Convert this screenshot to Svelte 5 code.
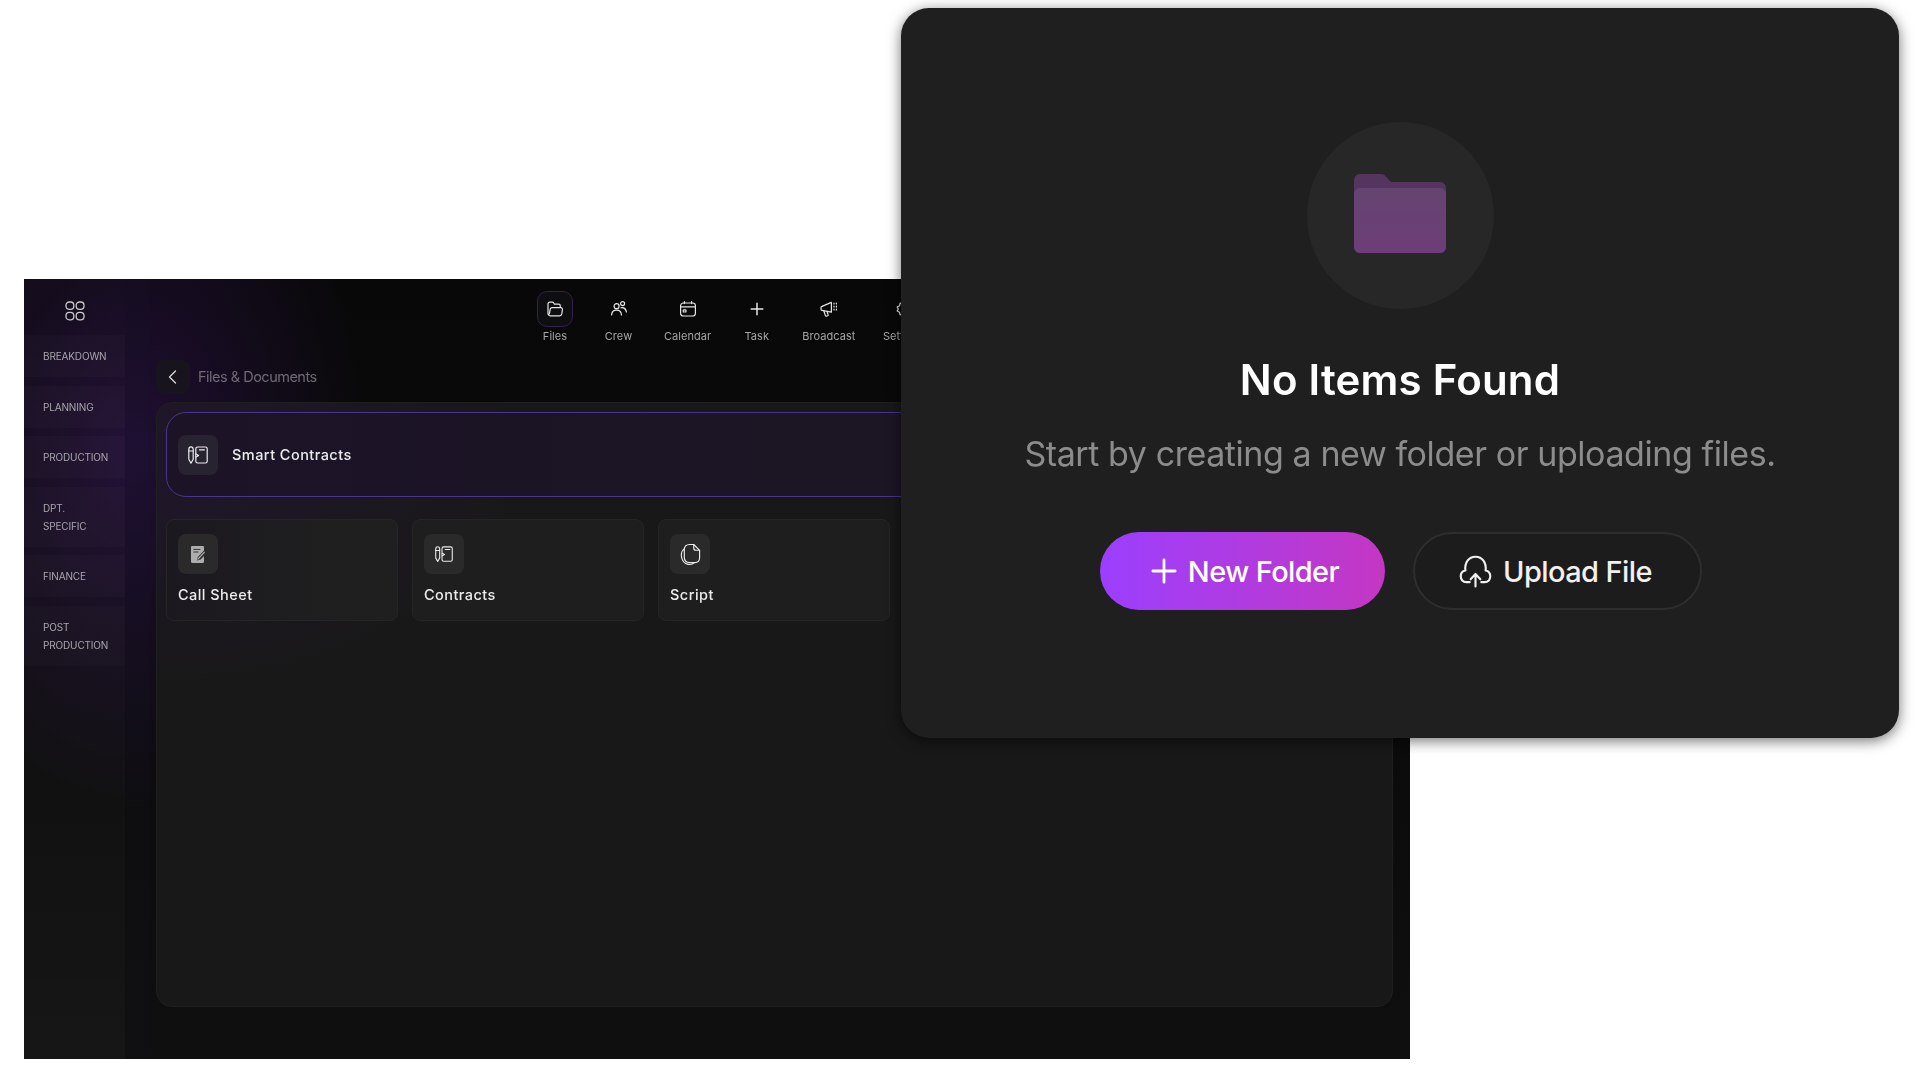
<script>
  const sections = [
    { lines: ['Breakdown'] },
    { lines: ['Planning'] },
    { lines: ['Production'] },
    { lines: ['Dpt.', 'Specific'] },
    { lines: ['Finance'] },
    { lines: ['Post', 'Production'] }
  ];

  const tabs = [
    { label: 'Files', icon: 'files', active: true },
    { label: 'Crew', icon: 'crew' },
    { label: 'Calendar', icon: 'calendar' },
    { label: 'Task', icon: 'task' },
    { label: 'Broadcast', icon: 'broadcast' },
    { label: 'Settings', icon: 'settings' }
  ];

  const folders = [
    { label: 'Call Sheet', icon: 'sheet' },
    { label: 'Contracts', icon: 'contract', size: 18 },
    { label: 'Script', icon: 'script' }
  ];
</script>

{#snippet tabIcon(name)}
  <svg viewBox="0 0 20 20" width="20" height="20" fill="none" stroke="currentColor" stroke-width="1.2" stroke-linecap="round" stroke-linejoin="round">
    {#if name === 'files'}
      <path d="M3 15V5.2C3 4 3.8 3.2 5 3.2h2.4c.6 0 1 .3 1.3.8l.7 1.2h4.2c1 0 1.7.7 1.7 1.700v1" />
      <path d="M3.200 15.400c.3.900 1 1.400 2 1.400h9.400c1.200 0 2-.8 2.200-1.900l.6-4.400c.1-1.100-.6-1.900-1.700-1.900H7.200c-1 0-1.800.6-2 1.600L4.600 14c-.1.800-.6 1.400-1.400 1.400z" />
    {:else if name === 'crew'}
      <circle cx="7.600" cy="7.200" r="2.500" />
      <circle cx="13.600" cy="4.600" r="2" />
      <path d="M2.600 16c.2-3 2.300-4.800 5-4.800s4.600 1.800 4.900 4.800" />
      <path d="M12 8.800c2.900-.4 5 1.300 5.400 4.200" />
    {:else if name === 'calendar'}
      <rect x="2.600" y="4" width="14.800" height="13" rx="2.800" />
      <path d="M2.800 7.800h14.400M6.400 2.600v2M13.600 2.600v2" />
      <rect x="5.200" y="10.800" width="2.800" height="2.200" rx=".6" />
    {:else if name === 'task'}
      <path d="M10 4.200v11.600M4.200 10h11.600" stroke-width="1.500" />
    {:else if name === 'broadcast'}
      <path d="M3 7.400 12.400 3.400v9.800L3 11.400c-.6-.1-1-.6-1-1.200V8.600c0-.6.4-1.100 1-1.200z" />
      <path d="M4.800 11.800 6.400 16.600c.2.500.7.700 1.200.5l1-.3c.5-.2.700-.7.500-1.200l-1-2.900" />
      <path d="M15 4.200v.8M17.400 4.200v.8M15 7.200v.8M17.400 7.200v.8M15 10.200v.8M17.400 10.200v.8" />
    {:else}
      <circle cx="10" cy="10" r="2.400" />
      <path d="M10 2.600l1.300 2.300 2.600-.7.600 2.600 2.300 1.300-1.100 1.900 1.100 1.900-2.300 1.300-.6 2.600-2.600-.7-1.300 2.300-1.300-2.300-2.600.7-.6-2.600-2.300-1.300 1.100-1.900-1.100-1.900 2.300-1.300.6-2.600 2.600.7z" />
    {/if}
  </svg>
{/snippet}

{#snippet folderIcon(name, size = 20)}
  {#if name === 'sheet'}
    <svg viewBox="0 0 14 17" width="14" height="17">
      <path d="M0 1.200C0 .5.500 0 1.200 0h10.600c.7 0 1.200.5 1.200 1.200v3.200L6.800 11l-.9 3.600 3.600-1 3.500-3.700v5.900c0 .7-.5 1.200-1.200 1.200H1.200C.5 17 0 16.500 0 15.800z" fill="#adadad" />
      <path d="M2.400 3.400h7M2.400 6h5" stroke="#2a2a2a" stroke-width=".9" />
      <path d="M13.200 5.600l.8.8-6.600 7-1.200.3.3-1.300z" fill="#adadad" />
    </svg>
  {:else if name === 'contract'}
    <svg viewBox="0 0 20 18" width={size} height={size * 0.9} fill="none" stroke="#ececec" stroke-width="1.200" stroke-linejoin="round" stroke-linecap="round">
      <path d="M.8 3.200C.8 1.800 1.800.8 3 .8s2.200 1 2.200 2.400v10L3 17.200.8 13.200z" />
      <path d="M.8 5h4.400" />
      <rect x="7.800" y="1" width="11.400" height="16" rx="1.800" />
      <path d="M11.400 3.800h5M8 8l2.600 1.500L8 11" />
    </svg>
  {:else}
    <svg viewBox="0 0 22 24" width="21" height="23" fill="none" stroke="#ececec" stroke-width="1.200" stroke-linejoin="round" stroke-linecap="round">
      <path d="M14.400 1.500H10C6.400 1.500 4.500 3.800 4.500 7v8c0 3.400 2.200 5.500 5.500 5.500h5.500c3 0 5-1.800 5-4.800V7.600z" />
      <path d="M14.400 1.500v3.600c0 1.400.8 2.500 2.400 2.500h3.700" />
      <path d="M4.600 5.800C1.800 8 .9 11.200 1.700 15c.8 3.900 3.300 6.600 6.800 7.300 2.700.5 5.100-.2 6.600-1.700" />
    </svg>
  {/if}
{/snippet}

<div class="stage">
  <div class="window">
    <aside class="sidebar">
      <div class="logo">
        <svg viewBox="0 0 20 20" width="20" height="20" fill="none" stroke="#c9c9c9" stroke-width="1.300">
          <rect x="1" y="1" width="7.800" height="7.400" rx="3.300" />
          <rect x="11.200" y="1" width="7.800" height="7.400" rx="3.300" />
          <rect x="1" y="11.400" width="7.800" height="7.400" rx="3.300" />
          <rect x="11.200" y="11.400" width="7.800" height="7.400" rx="3.300" />
        </svg>
      </div>
      <nav class="sections">
        {#each sections as section}
          <div class="section" class:double={section.lines.length > 1}>
            {#each section.lines as line}
              <span>{line}</span>
            {/each}
          </div>
        {/each}
      </nav>
    </aside>

    <div class="main">
      <header class="tabs">
        {#each tabs as tab}
          <div class="tab">
            <div class="tab-icon" class:active={tab.active}>
              {@render tabIcon(tab.icon)}
            </div>
            <span class="tab-label">{tab.label}</span>
          </div>
        {/each}
      </header>

      <div class="crumb">
        <button class="back" aria-label="Back">
          <svg viewBox="0 0 16 16" width="16" height="16" fill="none" stroke="#d8d8d8" stroke-width="1.300" stroke-linecap="round" stroke-linejoin="round">
            <path d="M10.500 2 4.500 8l6 6" />
          </svg>
        </button>
        <span class="crumb-title">Files &amp; Documents</span>
      </div>

      <section class="panel">
        <div class="banner">
          <div class="icon-box">{@render folderIcon('contract')}</div>
          <span class="item-label">Smart Contracts</span>
        </div>
        <div class="cards">
          {#each folders as folder}
            <div class="card">
              <div class="icon-box">{@render folderIcon(folder.icon, folder.size)}</div>
              <span class="item-label">{folder.label}</span>
            </div>
          {/each}
        </div>
      </section>
    </div>
  </div>

  <div class="modal">
    <div class="empty-circle">
      <svg class="big-folder" viewBox="0 0 92 79" width="92" height="79">
        <defs>
          <linearGradient id="folder-front" x1="0" y1="0" x2="0" y2="1">
            <stop offset="0" stop-color="#644470" />
            <stop offset="1" stop-color="#6d3d79" />
          </linearGradient>
        </defs>
        <path d="M0 6C0 2.700 2.700 0 6 0h21c2 0 3.500.8 4.600 2.300L37 8h49c3.300 0 6 2.700 6 6v10H0z" fill="#563460" />
        <path d="M0 20c0-3.300 2.700-6 6-6h80c3.300 0 6 2.700 6 6v53c0 3.300-2.700 6-6 6H6c-3.300 0-6-2.700-6-6z" fill="url(#folder-front)" />
      </svg>
    </div>
    <h2>No Items Found</h2>
    <p>Start by creating a new folder or uploading files.</p>
    <div class="actions">
      <button class="primary">
        <svg viewBox="0 0 28 28" width="26" height="26" fill="none" stroke="#fff" stroke-width="3" stroke-linecap="round">
          <path d="M14 2v24M2 14h24" />
        </svg>
        New Folder
      </button>
      <button class="secondary">
        <svg viewBox="0 0 34 34" width="33" height="33" fill="none" stroke="#f0f0f0" stroke-width="2.200" stroke-linecap="round" stroke-linejoin="round">
          <path d="M11 28H7.500C4 28 1.800 25.200 1.800 22c0-3 2-5.400 4.800-6C5.600 8 10 1.800 17 1.800S28.400 8 27.400 16c2.800.6 4.800 3 4.800 6 0 3.200-2.200 6-5.700 6H23" />
          <path d="M17 32.500V20M12 25l5-5.500 5 5.500" />
        </svg>
        Upload File
      </button>
    </div>
  </div>
</div>

<style>
  :global(body) {
    margin: 0;
    background: #fff;
  }

  .stage {
    position: relative;
    width: 1920px;
    height: 1080px;
    padding: 279px 0 0 24px;
    box-sizing: border-box;
    overflow: hidden;
    background: #fff;
    font-family: Inter, "Open Sans", sans-serif;
  }

  .window {
    display: flex;
    width: 1386px;
    height: 780px;
    overflow: hidden;
    background:
      radial-gradient(ellipse 240px 360px at 105px 170px, rgba(64, 22, 110, 0.42), transparent 100%),
      linear-gradient(180deg, #080808 0%, #0a0a0a 45%, #0f0f0f 100%);
  }

  .sidebar {
    flex: none;
    width: 101px;
    background: linear-gradient(180deg, rgba(255, 255, 255, 0.01), rgba(255, 255, 255, 0.03));
    filter: blur(0.3px);
  }

  .logo {
    display: flex;
    align-items: center;
    justify-content: center;
    height: 56px;
    padding-top: 7px;
    box-sizing: border-box;
  }

  .sections {
    display: flex;
    flex-direction: column;
    gap: 8.500px;
  }

  .section {
    display: flex;
    flex-direction: column;
    justify-content: center;
    height: 42px;
    padding-left: 19px;
    background: rgba(255, 255, 255, 0.02);
    color: #a9a6ad;
    font-size: 10px;
    line-height: 18px;
    text-transform: uppercase;
    letter-spacing: -0.15px;
  }

  .section.double {
    height: 60px;
  }

  .main {
    flex: 1;
    min-width: 0;
    display: flex;
    flex-direction: column;
    padding: 12px 17px 52px 31px;
    background: linear-gradient(90deg, rgba(24, 24, 48, 0.14) 0, rgba(24, 24, 48, 0.14) 24px, transparent 26px);
    filter: blur(0.3px);
  }

  .tabs {
    display: flex;
    gap: 27.500px;
    padding-left: 381px;
    height: 69px;
    box-sizing: border-box;
  }

  .tab {
    display: flex;
    flex-direction: column;
    align-items: center;
    gap: 2px;
    min-width: 36px;
    color: #e6e6e6;
  }

  .tab-icon {
    display: flex;
    align-items: center;
    justify-content: center;
    width: 36px;
    height: 36px;
    box-sizing: border-box;
    border-radius: 10px;
    border: 1px solid transparent;
  }

  .tab-icon.active {
    border-color: #34204f;
    background: #0e0e10;
  }

  .tab-label {
    font-size: 11px;
    line-height: 14px;
    color: #a6a6a6;
    white-space: nowrap;
    letter-spacing: 0.05px;
  }

  .crumb {
    display: flex;
    align-items: center;
    gap: 8px;
    height: 34px;
    margin-bottom: 8px;
  }

  .back {
    display: flex;
    align-items: center;
    justify-content: center;
    width: 34px;
    height: 34px;
    padding: 0;
    border: none;
    border-radius: 8px;
    background: #18141e;
  }

  .crumb-title {
    padding-bottom: 2px;
    color: #6f6b75;
    font-size: 14.500px;
    letter-spacing: -0.5px;
  }

  .panel {
    flex: 1;
    padding: 9px;
    box-sizing: border-box;
    border: 1px solid #1f1f1f;
    border-radius: 16px;
    background:
      radial-gradient(ellipse 380px 240px at 0 50px, rgba(50, 18, 88, 0.3), transparent 100%),
      #181818;
  }

  .banner {
    display: flex;
    align-items: center;
    gap: 14px;
    height: 85px;
    padding-left: 11px;
    box-sizing: border-box;
    border: 1px solid #49358a;
    border-radius: 20px;
    background: linear-gradient(90deg, #1c1327 0%, #1b1722 100%);
    margin-bottom: 22px;
  }

  .cards {
    display: flex;
    gap: 14px;
  }

  .card {
    display: flex;
    flex-direction: column;
    align-items: flex-start;
    gap: 11px;
    width: 232px;
    height: 102px;
    padding: 14px 11px;
    box-sizing: border-box;
    border: 1px solid #252525;
    border-radius: 8px;
    background: #1e1e1e;
  }

  .card:first-child {
    background: linear-gradient(90deg, #1b1820 0%, #1f1f1f 70%);
  }

  .icon-box {
    display: flex;
    align-items: center;
    justify-content: center;
    flex: none;
    width: 40px;
    height: 40px;
    border-radius: 8px;
    background: #2a2a2a;
  }

  .banner .icon-box {
    background: #272330;
  }

  .item-label {
    color: #ececec;
    font-size: 14.500px;
    line-height: 20px;
    font-weight: 500;
    letter-spacing: 0.45px;
  }

  .modal {
    position: absolute;
    left: 901px;
    top: 8px;
    width: 998px;
    height: 730px;
    box-sizing: border-box;
    padding-top: 114px;
    display: flex;
    flex-direction: column;
    align-items: center;
    border-radius: 28px;
    background: #1f1f1f;
    box-shadow: 0 3px 14px rgba(0, 0, 0, 0.55);
  }

  .empty-circle {
    display: flex;
    align-items: center;
    justify-content: center;
    width: 187px;
    height: 187px;
    border-radius: 50%;
    background: #272727;
  }

  .big-folder {
    margin-bottom: 4px;
  }

  h2 {
    margin: 47px 0 0;
    color: #fff;
    font-size: 42px;
    line-height: 48px;
    font-weight: 600;
    letter-spacing: 0.2px;
    filter: blur(0.6px);
  }

  p {
    margin: 29px 0 0;
    color: #8c8c8c;
    font-size: 34px;
    line-height: 42px;
    letter-spacing: -0.42px;
    filter: blur(0.6px);
  }

  .actions {
    display: flex;
    gap: 28px;
    margin-top: 57px;
    padding-left: 1px;
  }

  .actions button {
    display: flex;
    align-items: center;
    justify-content: center;
    gap: 11px;
    height: 78px;
    border-radius: 39px;
    font-family: inherit;
    font-size: 29px;
    font-weight: 500;
    letter-spacing: -0.6px;
  }

  .primary {
    width: 285px;
    padding: 0 0 0 6px;
    border: none;
    color: #fff;
    background: linear-gradient(90deg, #9b3ffe 0%, #c437c3 100%);
  }

  .secondary {
    width: 289px;
    padding: 0 3px 0 0;
    border: 2px solid #2e2e2e;
    color: #f0f0f0;
    background: #1c1c1c;
  }
</style>
